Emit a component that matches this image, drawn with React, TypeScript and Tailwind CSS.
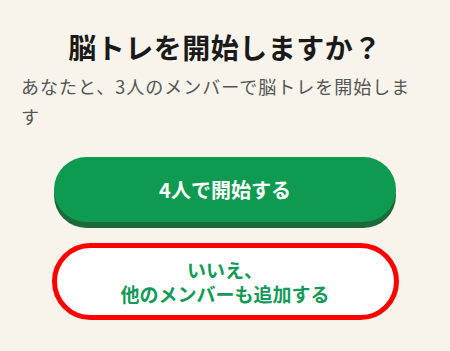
export default function App() {
  return (
    <div
      className="min-h-[351px] w-[450px] bg-[#f8f4eb] px-[21px] pt-[28px]"
      style={{ fontFamily: '"Noto Sans CJK JP", "Noto Sans", sans-serif' }}
    >
      <h1 className="text-center text-[28px] font-bold leading-[39px] tracking-[0.5px] text-[#1a1a1a]">
        脳トレを開始しますか？
      </h1>
      <p className="mt-[4px] text-[18px] leading-[30px] tracking-[1px] text-[#555555]">
        あなたと、3人のメンバーで脳トレを開始します
      </p>
      <div className="mt-[26px] flex flex-col items-center gap-[21px]">
        <button className="h-[65px] w-[342px] rounded-full bg-[#0e9a51] text-[20px] font-bold text-white shadow-[0_6px_0_#1c6a3a]">
          4人で開始する
        </button>
        <button className="flex h-[77px] w-[347px] flex-col items-center justify-center rounded-full border-[5px] border-[#ff0000] bg-white text-[19px] font-bold leading-[24px] text-[#14995a]">
          <span>いいえ、</span>
          <span>他のメンバーも追加する</span>
        </button>
      </div>
    </div>
  );
}
